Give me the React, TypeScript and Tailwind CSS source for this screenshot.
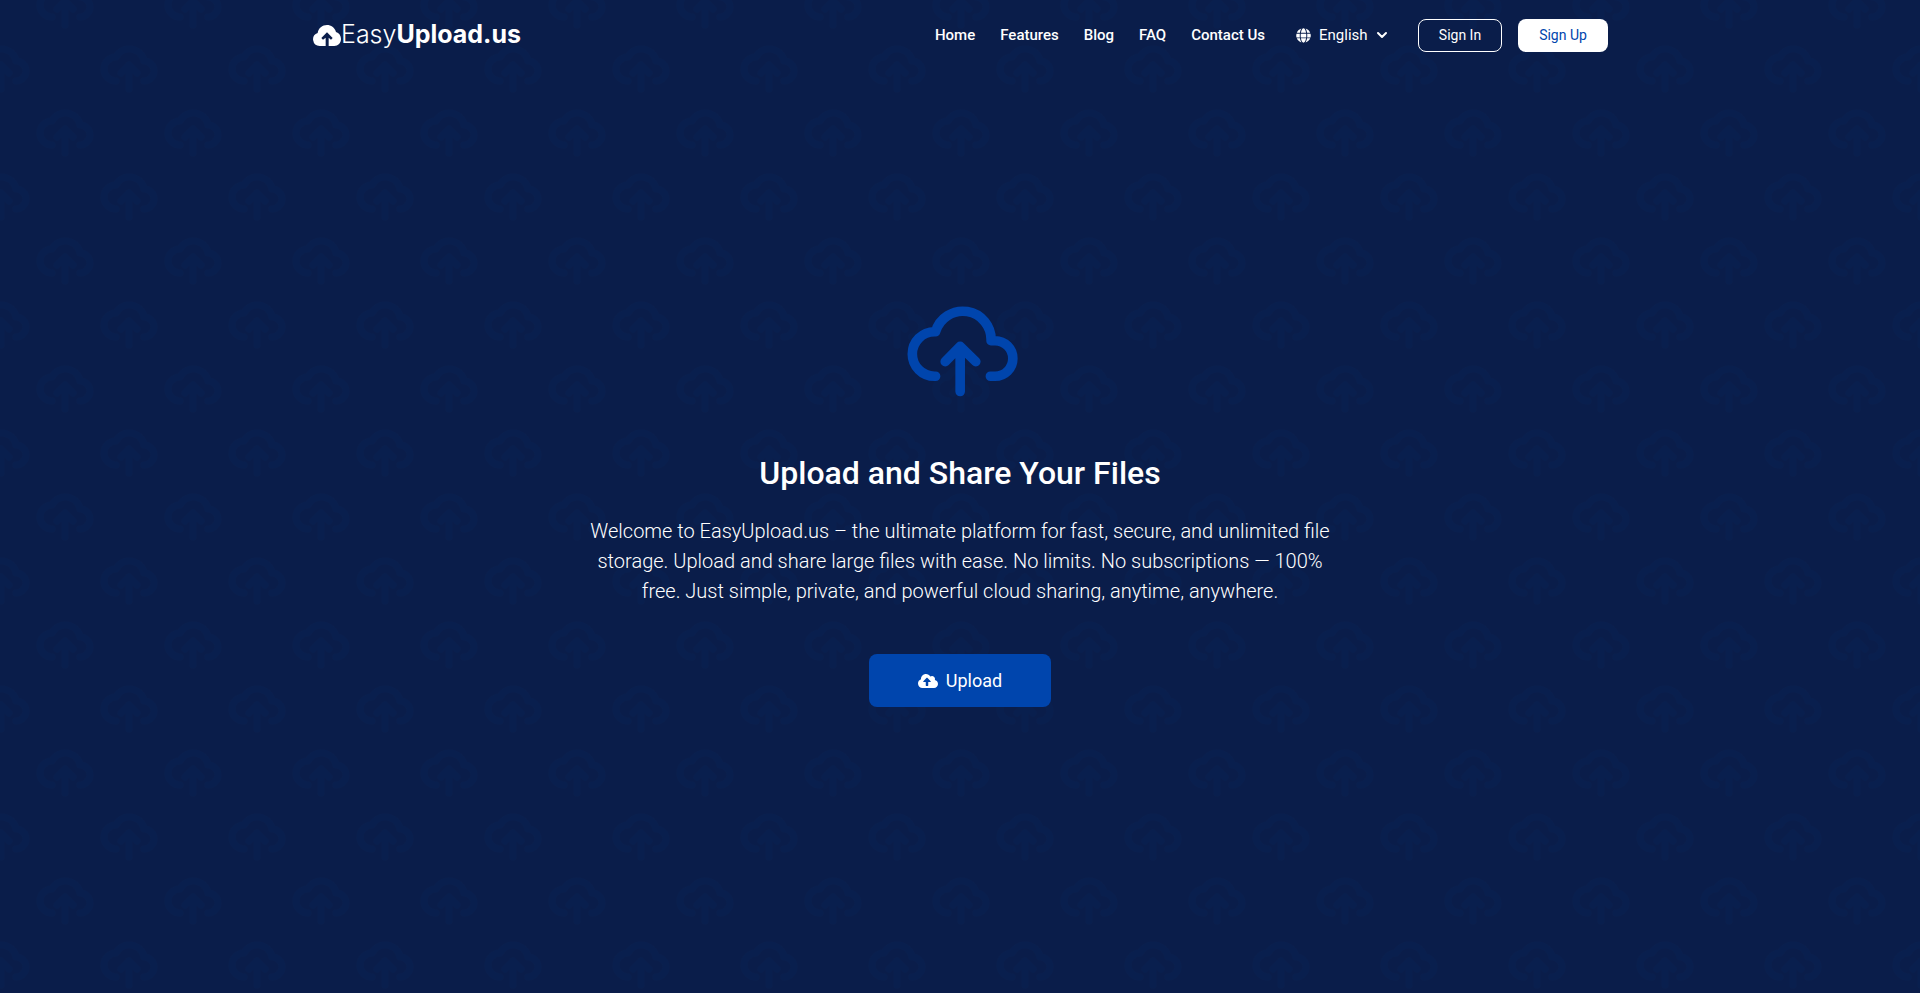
import { FaCloudUploadAlt, FaGlobe } from "react-icons/fa"
import { ChevronDown } from "lucide-react"

const navLinks = ["Home", "Features", "Blog", "FAQ", "Contact Us"]

function LogoCloud() {
    return (
        <svg viewBox="0 0 84 63" className="h-[21px] w-7" aria-hidden="true">
            <path
                fill="currentColor"
                d="M20 63A20 20 0 0 1 14 24C16 9 28 0 42 0C54 0 65 7 69 21C78 24 84 32 84 42C84 54 75 63 64 63H47V38L54 44L59 39L42 22L25 39L30 44L38 38V63Z"
            />
        </svg>
    )
}

function UploadCloud() {
    return (
        <svg
            viewBox="34 47 349 273"
            className="h-[91px] w-[116px] text-[#0045ad]"
            fill="none"
            stroke="currentColor"
            strokeWidth="29"
            strokeLinecap="round"
            strokeLinejoin="round"
            aria-hidden="true"
        >
            <path d="M135 258H132A67 67 0 0 1 132 124H135A85.2 85.2 0 0 1 302 151H314A53 53 0 0 1 314 258H300" />
            <path d="M209 304V168M164 214L209 168L256 214" />
        </svg>
    )
}

function BackgroundPattern() {
    return (
        <svg className="absolute inset-0 h-full w-full" aria-hidden="true">
            <defs>
                <g id="cloud" fill="none" stroke="#091f4e" strokeWidth="7" strokeLinecap="round" strokeLinejoin="round">
                    <path d="M16 41A12 12 0 0 1 16 17A15 15 0 0 1 44 21A10 10 0 0 1 44 41" />
                    <path d="M29 49V25M21 33L29 25L37 33" />
                </g>
                <pattern id="clouds" width="128" height="128" patternUnits="userSpaceOnUse">
                    <use href="#cloud" x="36" y="104" />
                    <use href="#cloud" x="36" y="-24" />
                    <use href="#cloud" x="100" y="40" />
                    <use href="#cloud" x="-28" y="40" />
                </pattern>
            </defs>
            <rect width="100%" height="100%" fill="url(#clouds)" />
        </svg>
    )
}

function Header() {
    return (
        <header className="relative mx-auto flex h-[70px] w-full max-w-[1320px] items-center justify-between px-3">
            <a href="#" className="flex items-center pl-px font-['Inter',sans-serif] text-[25px]">
                <LogoCloud />
                <span className="font-light">Easy</span>
                <span className="font-bold">Upload.us</span>
            </a>

            <div className="flex items-center">
                <nav className="flex items-center gap-[25px] text-[15px] font-medium">
                    {navLinks.map((label) => (
                        <a key={label} href="#" className="hover:opacity-80">{label}</a>
                    ))}
                </nav>

                <div className="relative ml-[31px] flex items-center text-[15px]">
                    <FaGlobe className="h-[15px] w-[15px]" />
                    <select aria-label="Language" className="w-[79px] appearance-none bg-transparent pl-2">
                        <option>English</option>
                    </select>
                    <ChevronDown className="pointer-events-none absolute right-0 h-4 w-4" strokeWidth={3} />
                </div>

                <button className="ml-7 h-[33px] w-[84px] rounded-lg border border-white text-sm">Sign In</button>
                <button className="ml-4 h-[33px] w-[90px] rounded-lg bg-white text-sm text-[#0045ad]">Sign Up</button>
            </div>
        </header>
    )
}

export default function App() {
    return (
        <div className="relative flex min-h-screen flex-col bg-[#0a1d4a] font-['Roboto',sans-serif] text-white">
            <BackgroundPattern />
            <Header />
            <main className="relative flex flex-1 flex-col items-center justify-center px-3 pb-[50px] text-center">
                <UploadCloud />
                <h1 className="mt-14 text-[32px] leading-10 font-medium">Upload and Share Your Files</h1>
                <p className="mt-[23px] max-w-[750px] text-xl leading-[30px] font-light">
                    Welcome to EasyUpload.us – the ultimate platform for fast, secure, and unlimited file storage. Upload and
                    share large files with ease. No limits. No subscriptions — 100% free. Just simple, private, and powerful
                    cloud sharing, anytime, anywhere.
                </p>
                <button className="mt-12 flex h-[53px] w-[182px] items-center justify-center gap-2 rounded-lg bg-[#0045ad] text-lg">
                    <FaCloudUploadAlt className="h-5 w-5" />
                    Upload
                </button>
            </main>
        </div>
    )
}
